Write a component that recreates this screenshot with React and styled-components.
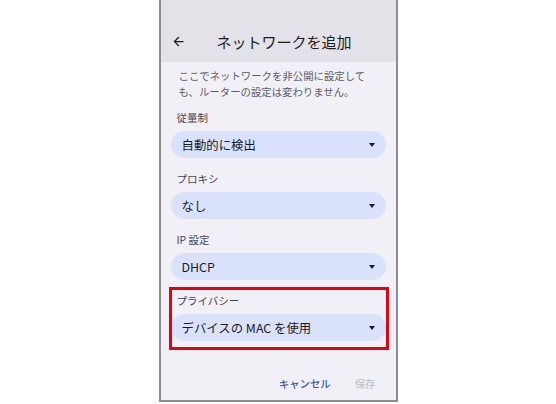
import styled, { createGlobalStyle } from "styled-components";

const GlobalStyle = createGlobalStyle`
  html, body {
    margin: 0;
    padding: 0;
    background: #ffffff;
  }
  body {
    font-family: "Noto Sans CJK JP", "Noto Sans", Roboto, sans-serif;
  }
`;

const Page = styled.div`
  width: 556px;
  height: 404px;
  display: flex;
  justify-content: center;
  align-items: flex-start;
  overflow: hidden;
`;

const Phone = styled.div`
  width: 235px;
  height: 400px;
  border: 2px solid #8d8d8f;
  border-top: none;
  background: #f0f0f6;
  display: flex;
  flex-direction: column;
`;

const Header = styled.div`
  height: 62px;
  background: #e2e2e8;
  display: flex;
  align-items: center;
  padding: 20px 0 0 10px;
  box-sizing: border-box;
`;

const BackButton = styled.div`
  width: 16px;
  height: 16px;
  display: flex;
  align-items: center;
  justify-content: center;
  margin-right: 30px;
`;

const Title = styled.h1`
  margin: 0;
  font-size: 15px;
  font-weight: 400;
  color: #1b1b1f;
  letter-spacing: 0;
`;

const Body = styled.div`
  display: flex;
  flex-direction: column;
  padding: 6px 10px 0 10px;
`;

const Description = styled.p`
  margin: 0 0 10px 0;
  padding: 0 8px;
  font-size: 10.4px;
  line-height: 16px;
  color: #5c5e66;
`;

const Field = styled.div`
  position: relative;
  display: flex;
  flex-direction: column;
  gap: 5px;
  margin-bottom: 13px;

  ${(p) =>
    p.$highlighted &&
    `
    &::after {
      content: "";
      position: absolute;
      top: -6px;
      bottom: -9px;
      left: -2px;
      right: -3px;
      border: 3px solid #e60012;
      pointer-events: none;
    }
  `}
`;

const Label = styled.div`
  padding-left: 6px;
  font-size: 10.5px;
  line-height: 16px;
  color: #44464f;
`;

const Select = styled.div`
  height: 27px;
  border-radius: 14px;
  background: #d9e1fb;
  display: flex;
  align-items: center;
  justify-content: space-between;
  padding: 0 11px 0 11px;
  font-size: 12.4px;
  color: #1b1b1f;
`;

const Caret = styled.span`
  width: 0;
  height: 0;
  border-left: 3.5px solid transparent;
  border-right: 3.5px solid transparent;
  border-top: 4px solid #1b1b1f;
`;

const Actions = styled.div`
  display: flex;
  justify-content: flex-end;
  align-items: center;
  gap: 24px;
  padding: 22px 10px 0 0;
`;

const ActionButton = styled.span`
  font-size: 10.4px;
  line-height: 16px;
  font-weight: 500;
  color: ${(p) => (p.$disabled ? "#c2c3cb" : "#3f5896")};
`;

const fields = [
  { label: "従量制", value: "自動的に検出" },
  { label: "プロキシ", value: "なし" },
  { label: "IP 設定", value: "DHCP" },
  { label: "プライバシー", value: "デバイスの MAC を使用", highlighted: true },
];

export default function App() {
  return (
    <>
      <GlobalStyle />
      <Page>
        <Phone>
          <Header>
            <BackButton>
              <svg width="15" height="15" viewBox="0 0 24 24">
                <path d="M20 11H7.83l5.59-5.59L12 4l-8 8 8 8 1.41-1.41L7.83 13H20v-2z" fill="#1b1b1f" />
              </svg>
            </BackButton>
            <Title>ネットワークを追加</Title>
          </Header>
          <Body>
            <Description>
              ここでネットワークを非公開に設定しても、ルーターの設定は変わりません。
            </Description>
            {fields.map((f) => (
              <Field key={f.label} $highlighted={f.highlighted}>
                <Label>{f.label}</Label>
                <Select>
                  {f.value}
                  <Caret />
                </Select>
              </Field>
            ))}
            <Actions>
              <ActionButton>キャンセル</ActionButton>
              <ActionButton $disabled>保存</ActionButton>
            </Actions>
          </Body>
        </Phone>
      </Page>
    </>
  );
}
